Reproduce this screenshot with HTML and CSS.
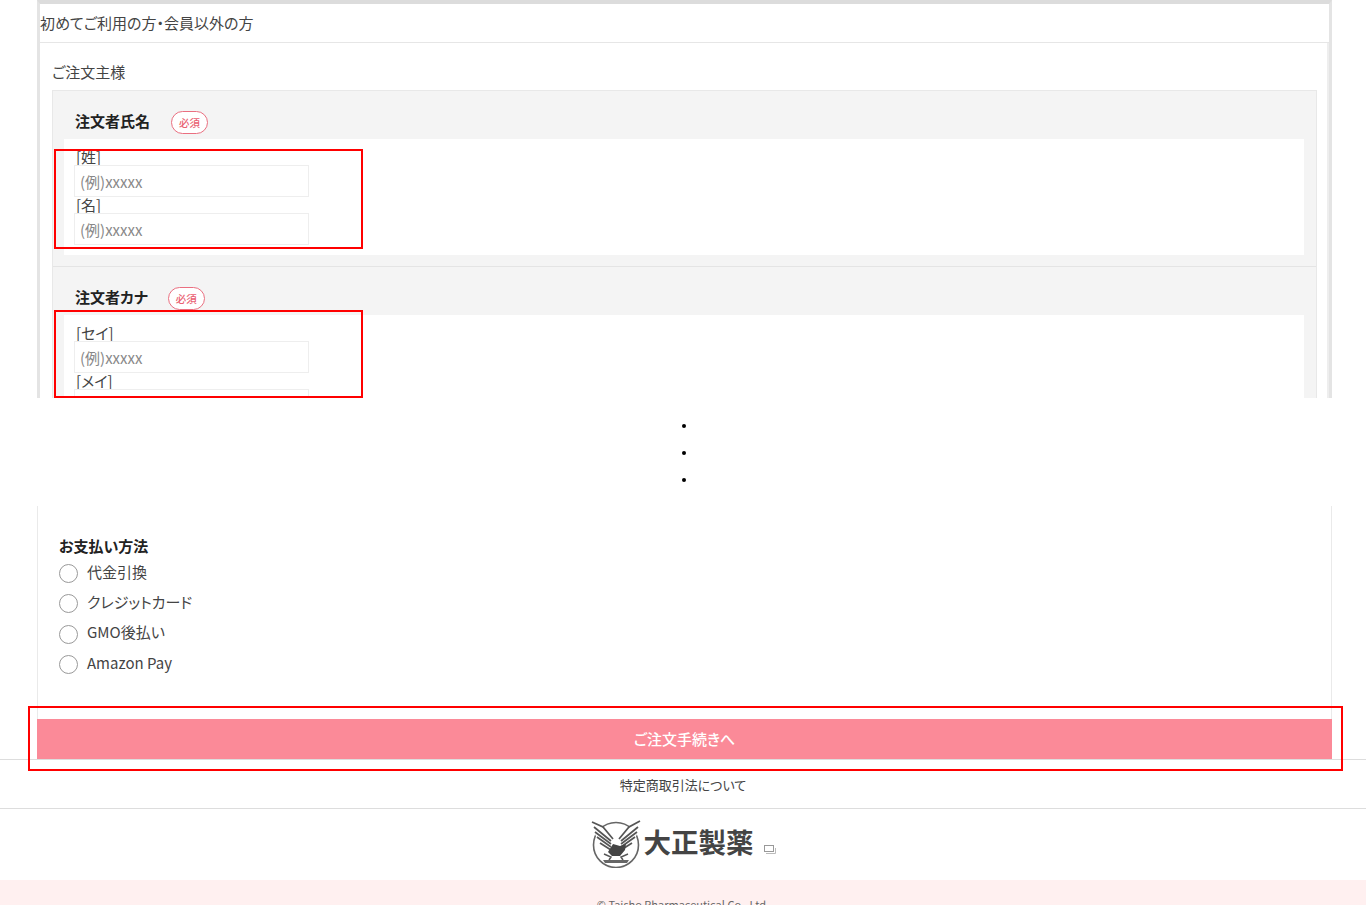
FILE: index.html
```html
<!DOCTYPE html>
<html lang="ja">
<head>
    <meta charset="UTF-8">
    <meta name="viewport" content="width=device-width, initial-scale=1.0">
    <title>ご注文手続き</title>
    <link rel="stylesheet" href="styles.css">
</head>
<body>
    <div class="page">
        <!-- Order form, cut off -->
        <section class="top-crop">
            <div class="guest-box">
                <h2 class="guest-title">初めてご利用の方・会員以外の方</h2>
                <div class="guest-body">
                    <h3 class="group-title">ご注文主様</h3>
                    <div class="form-table">
                        <div class="form-row">
                            <div class="row-head">
                                <span class="row-name">注文者氏名</span>
                                <span class="required">必須</span>
                            </div>
                            <div class="row-fields">
                                <label class="field-label" for="sei">[姓]</label>
                                <input class="text-input" id="sei" type="text" placeholder="(例)xxxxx">
                                <label class="field-label" for="mei">[名]</label>
                                <input class="text-input" id="mei" type="text" placeholder="(例)xxxxx">
                            </div>
                        </div>
                        <div class="form-row">
                            <div class="row-head">
                                <span class="row-name">注文者カナ</span>
                                <span class="required">必須</span>
                            </div>
                            <div class="row-fields">
                                <label class="field-label" for="kana-sei">[セイ]</label>
                                <input class="text-input" id="kana-sei" type="text" placeholder="(例)xxxxx">
                                <label class="field-label" for="kana-mei">[メイ]</label>
                                <input class="text-input" id="kana-mei" type="text">
                            </div>
                        </div>
                    </div>
                </div>
            </div>
        </section>

        <!-- Omitted part -->
        <div class="dots">
            <span class="dot"></span>
            <span class="dot"></span>
            <span class="dot"></span>
        </div>

        <!-- Payment -->
        <section class="payment">
            <h3 class="payment-title">お支払い方法</h3>
            <label class="pay-option"><input class="pay-radio" type="radio" name="pay">代金引換</label>
            <label class="pay-option"><input class="pay-radio" type="radio" name="pay">クレジットカード</label>
            <label class="pay-option"><input class="pay-radio" type="radio" name="pay">GMO後払い</label>
            <label class="pay-option"><input class="pay-radio" type="radio" name="pay">Amazon Pay</label>
        </section>
        <button class="submit-btn" type="button">ご注文手続きへ</button>

        <!-- Footer -->
        <footer class="footer">
            <div class="footer-link">特定商取引法について</div>
            <div class="footer-logo">
                <svg class="eagle" viewBox="0 0 50 49" aria-hidden="true">
                    <circle cx="25" cy="26" r="22.5" fill="none" stroke="#666" stroke-width="1.6"/>
                    <!-- wings -->
                    <path d="M1 3 L10 7 L21 17 L23 30 L17 32 L9 27 L4 15 Z" fill="#fff"/>
                    <path d="M49 2 L40 7 L29 17 L27 30 L33 32 L41 27 L46 15 Z" fill="#fff"/>
                    <path d="M1 3 L12 8 L22 20 M3 8 L20 22 M4 13 L20 25 M6 18 L20 28 M9 24 L20 31" stroke="#555" stroke-width="1.7" fill="none"/>
                    <path d="M49 2 L38 8 L28 20 M47 8 L30 22 M46 13 L30 25 M44 18 L30 28 M41 24 L30 31" stroke="#555" stroke-width="1.7" fill="none"/>
                    <!-- body -->
                    <path d="M17 33 L22 25 L29 27 L35 25 L34 31 L29 37 L21 37 Z" fill="#444"/>
                    <path d="M13 35 L20 38 L18 41 M37 35 L30 38 L32 41" stroke="#555" stroke-width="1.5" fill="none"/>
                    <path d="M12 41 H38 L36 44 H14 Z" fill="#666"/>
                </svg>
                <span class="logo-text">大正製薬</span>
                <svg class="ext-icon" viewBox="0 0 12 10" aria-hidden="true">
                    <rect x="0.5" y="0.5" width="9" height="6" fill="#fff" stroke="#999"/>
                    <path d="M2 8.5 H11.5 V3" fill="none" stroke="#bbb"/>
                </svg>
            </div>
            <div class="copyright">© Taisho Pharmaceutical Co., Ltd.</div>
        </footer>

        <!-- Red annotation frames -->
        <div class="marker marker-name"></div>
        <div class="marker marker-kana"></div>
        <div class="marker marker-submit"></div>
    </div>
</body>
</html>
```

FILE: styles.css
```css
/* Base Styles */
* {
    margin: 0;
    padding: 0;
    box-sizing: border-box;
    font-family: 'Noto Sans CJK JP', 'Noto Sans', sans-serif;
    font-feature-settings: "palt";
}

html, body {
    height: 905px;
    overflow: hidden;
    background: #fff;
    color: #333;
}

.page {
    position: relative;
    height: 905px;
    overflow: hidden;
    font-size: 15px;
}

/* Order form */
.top-crop {
    height: 398px;
    overflow: hidden;
    padding: 0 34px 0 37px;
}

.guest-box {
    border-top: 4px solid #dcdcdc;
    border-left: 3px solid #e4e4e4;
    border-right: 3px solid #e4e4e4;
}

.guest-title {
    height: 39px;
    border-bottom: 1px solid #e6e6e6;
    font-size: 15px;
    font-weight: 400;
    line-height: 38px;
    color: #444;
}

.guest-body {
    padding: 19px 12px 0;
    box-shadow: inset -2px 0 #eee;
}

.group-title {
    height: 28px;
    line-height: 20px;
    font-size: 15px;
    font-weight: 400;
    color: #444;
}

.form-table {
    border: 1px solid #e8e8e8;
}

.form-row {
    background: #f4f4f4;
    padding: 0 12px 11px 11px;
    border-bottom: 1px solid #e4e4e4;
}

.row-head {
    display: flex;
    align-items: center;
    height: 48px;
    padding: 20px 0 10px 11px;
}

.row-name {
    font-size: 15px;
    font-weight: 700;
    color: #222;
    margin-right: 21px;
}

.form-row + .form-row .row-name {
    margin-right: 20px;
}

.required {
    flex-shrink: 0;
    width: 37px;
    height: 23px;
    margin-top: 5px;
    border: 1px solid #ea6f80;
    border-radius: 12px;
    background: #fff;
    color: #ea5f72;
    font-size: 10.5px;
    font-weight: 500;
    line-height: 22px;
    text-align: center;
}

.row-fields {
    background: #fff;
    padding: 9px 0 10px 10px;
}

.field-label {
    display: block;
    height: 16px;
    padding-left: 2px;
    font-size: 15px;
    line-height: 16px;
    color: #444;
}

.field-label:first-child {
    height: 17px;
    line-height: 18px;
}

.text-input {
    display: block;
    position: relative;
    width: 235px;
    height: 32px;
    padding: 0 5px;
    border: 1px solid #eee;
    background: #fff;
    font-size: 15px;
    outline: none;
}

.text-input::placeholder {
    color: #888;
    opacity: 1;
}

/* Dots */
.dots {
    display: flex;
    flex-direction: column;
    align-items: center;
    justify-content: center;
    gap: 23px;
    height: 108px;
    padding: 2px 0 0 2px;
}

.dot {
    width: 4px;
    height: 4px;
    border-radius: 50%;
    background: #000;
}

/* Payment */
.payment {
    height: 213px;
    margin: 0 34px 0 37px;
    padding: 30px 0 0 21px;
    border-left: 1px solid #eaeaea;
    border-right: 1px solid #eaeaea;
}

.payment-title {
    font-size: 15px;
    font-weight: 700;
    line-height: 20px;
    color: #222;
}

.pay-option {
    display: flex;
    align-items: center;
    height: 30.3px;
    font-size: 15px;
    color: #444;
}

.pay-radio {
    appearance: none;
    width: 19px;
    height: 19px;
    margin: 5px 9px 0 0;
    border: 1.5px solid #999;
    border-radius: 50%;
    background: #fff;
}

.submit-btn {
    display: block;
    position: relative;
    width: 1295px;
    height: 40px;
    margin-left: 37px;
    padding-bottom: 2px;
    border: none;
    background: #fb8a98;
    color: #fff;
    font-size: 15px;
    font-weight: 500;
}

/* Footer */
.footer-link {
    height: 50px;
    border-top: 1px solid #ddd;
    border-bottom: 1px solid #ddd;
    font-size: 13px;
    line-height: 50px;
    text-align: center;
    color: #444;
}

.footer-logo {
    display: flex;
    align-items: flex-start;
    justify-content: center;
    height: 71px;
    padding: 10px 0 0 0;
}

.eagle {
    width: 50px;
    height: 49px;
    margin-right: 3px;
}

.logo-text {
    font-size: 27.5px;
    font-weight: 700;
    line-height: 44px;
    color: #444;
}

.ext-icon {
    width: 12px;
    height: 10px;
    margin: 26px 0 0 10px;
}

.copyright {
    height: 40px;
    padding-top: 16px;
    background: #fff0f0;
    font-size: 11px;
    line-height: 16px;
    text-align: center;
    color: #666;
}

/* Red annotation frames */
.marker {
    position: absolute;
    border: 2px solid #f00;
    pointer-events: none;
}

.marker-name {
    top: 149px;
    left: 54px;
    width: 309px;
    height: 100px;
}

.marker-kana {
    top: 310px;
    left: 54px;
    width: 309px;
    height: 88px;
}

.marker-submit {
    top: 706px;
    left: 28px;
    width: 1315px;
    height: 65px;
}
```
